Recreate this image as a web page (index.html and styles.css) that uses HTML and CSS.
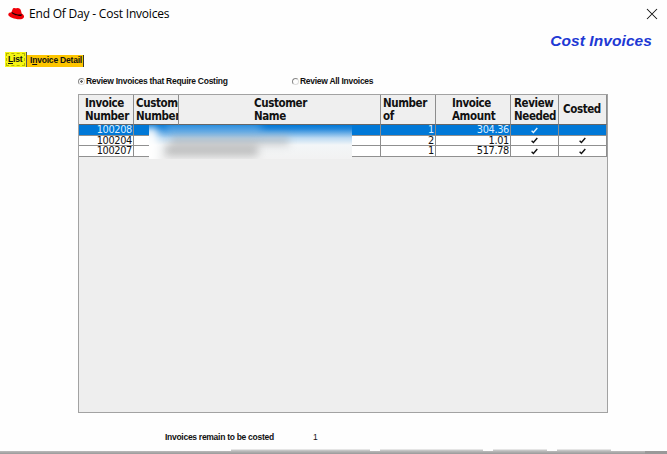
FILE: index.html
```html
<!DOCTYPE html>
<html lang="en">
<head>
<meta charset="utf-8">
<title>End Of Day - Cost Invoices</title>
<link rel="stylesheet" href="styles.css">
</head>
<body>
<div class="window">
  <header class="titlebar">
    <svg class="hat" width="17" height="13" viewBox="0 0 17 13"><path d="M.3 7.2C.5 5.8 2 5.4 3.3 5.6L4.6 2.2C5.2 1 6 .9 7 1.2 8 1.5 8.6 1 9.5 1 11.5 1 12.5 2 13 3.8L13.7 6.5C15.5 7.5 16.3 8.7 16 10 15.5 12.8 11 12.6 7.5 11.8 3.5 10.9 0 9.2.3 7.2Z" fill="#f00008"/><path d="M3.6 5.6C4.5 7.6 9.5 9.6 13 8.9 13.8 8.6 13.9 7.9 13.6 6.9 12.5 8 8 7.6 3.9 4.9Z" fill="#160406"/></svg>
    <span class="title">End Of Day - Cost Invoices</span>
    <svg class="close" width="12" height="12" viewBox="0 0 12 12"><path d="M1 1 11 11M11 1 1 11" stroke="#111" stroke-width="1.05"/></svg>
  </header>
  <h1>Cost Invoices</h1>
  <nav class="tabs">
    <div class="tab active"><span><u>L</u>ist</span></div>
    <div class="tab"><span>I<u>n</u>voice Detail</span></div>
  </nav>
  <div class="filters">
    <label class="first"><i class="radio on"></i><span>Review Invoices that Require Costing</span></label>
    <label><i class="radio"></i><span>Review All Invoices</span></label>
  </div>
  <main class="grid">
    <div class="row head">
      <div>Invoice<br>Number</div><div class="clip">Custome<br>Number</div><div class="name">Customer<br>Name</div><div class="of">Number<br>of</div><div class="amount">Invoice<br>Amount</div><div class="review">Review<br>Needed</div><div class="costed">Costed</div>
    </div>
    <div class="row selected"><div>100208</div><div></div><div></div><div>1</div><div>304.36</div><div class="mark"><svg width="7" height="7" viewBox="0 0 7 7"><path d="M.6 3.8 2.4 5.5 6.3 1"/></svg></div><div></div></div>
    <div class="row short"><div>100204</div><div></div><div></div><div>2</div><div>1.01</div><div class="mark"><svg width="7" height="7" viewBox="0 0 7 7"><path d="M.6 3.8 2.4 5.5 6.3 1"/></svg></div><div class="mark"><svg width="7" height="7" viewBox="0 0 7 7"><path d="M.6 3.8 2.4 5.5 6.3 1"/></svg></div></div>
    <div class="row"><div>100207</div><div></div><div></div><div>1</div><div>517.78</div><div class="mark"><svg width="7" height="7" viewBox="0 0 7 7"><path d="M.6 3.8 2.4 5.5 6.3 1"/></svg></div><div class="mark"><svg width="7" height="7" viewBox="0 0 7 7"><path d="M.6 3.8 2.4 5.5 6.3 1"/></svg></div></div>
    <div class="redaction"><i class="smudge pale"></i><i class="smudge one"></i><i class="smudge two"></i><i class="smudge three"></i></div>
  </main>
  <div class="summary"><b>Invoices remain to be costed</b><span>1</span></div>
  <footer><div class="buttons"><i></i><i></i><i></i><i></i></div><div class="edge"></div></footer>
</div>
</body>
</html>
```

FILE: styles.css
```css
* { box-sizing: border-box; }
body { margin: 0; background: #fefefe; color: #111; overflow: hidden; }
.window { width: 667px; height: 454px; display: flex; flex-direction: column; font: bold 8.5px/10px "Liberation Sans", Arial, sans-serif; letter-spacing: -.28px; }
.titlebar { height: 27px; display: flex; align-items: center; padding: 0 9px 0 8px; flex: none; }
.hat { margin-right: 4px; }
.title { font: 12px/18px "Open Sans", "Noto Sans", sans-serif; letter-spacing: -.2px; color: #000; white-space: nowrap; }
.close { margin-left: auto; }
h1 { margin: 4px 15px 0 0; height: 20px; font: italic bold 15.5px/20px "Liberation Sans", Arial, sans-serif; color: #2038d4; text-align: right; letter-spacing: .08px; flex: none; }
.tabs { height: 15px; margin: 1px 0 0 5px; display: flex; align-items: flex-end; flex: none; }
.tab { height: 12px; width: 57px; background: #fdc500; border-right: 1px solid #38352b; line-height: 11px; padding-left: 3px; white-space: nowrap; letter-spacing: -.2px; }
.tab.active { width: 22px; height: 15px; background: #f5f514; padding: 0; border-right: 1px solid #555; }
.tab.active span { display: block; width: 19px; height: 13px; margin: 1px; border: 1px dashed #b5b500; padding-left: 1px; line-height: 10px; }
.tab u { text-underline-offset: 1px; }
.filters { height: 12px; margin: 8px 0 0 78px; display: flex; flex: none; }
.filters label { display: flex; align-items: center; white-space: nowrap; }
.filters .first { width: 214px; }
.radio { width: 7px; height: 7px; border: 1px solid #888; border-right-color: #ddd; border-bottom-color: #ddd; border-radius: 50%; margin-right: 1px; }
.radio.on { background: radial-gradient(circle, #666 1px, transparent 1.5px); }
.grid { position: relative; width: 530px; height: 319px; margin: 7px 0 0 78px; border: 1px solid #a2a2a2; background: #eee; flex: none; }
.row { display: grid; grid-template-columns: 55px 45px 202px 55px 75px 48px 48px; height: 11px; background: #fff; font: 10.9px/11px "DejaVu Sans Condensed", "Noto Sans", sans-serif; letter-spacing: -.35px; }
.row.short { height: 10px; }
.row > div { border-right: 1px solid #8d8d8d; border-bottom: 1px solid #909090; text-align: right; padding-right: 1px; white-space: nowrap; line-height: 9px; min-width: 0; }
.row.selected { background: #0078d7; color: #dceeff; }
.row.head { height: 30px; background: #efefef; font: bold 11.5px/13px "DejaVu Sans Condensed", "Noto Sans", sans-serif; letter-spacing: -.4px; }
.row.head > div { text-align: left; padding: 2px 0 0 6px; line-height: 13px; border-bottom: 1px solid #666; }
.row.head .clip { padding-left: 2px; overflow: hidden; }
.row.head .name { padding-left: 75px; }
.row.head .of { padding-left: 2px; }
.row.head .amount { padding-left: 16px; }
.row.head .review { padding-left: 3px; }
.row.head .costed { padding: 8px 0 0 4px; }
.row > .mark { display: flex; justify-content: center; align-items: center; }
.mark path { fill: none; stroke: #111; stroke-width: 1.4; }
.selected .mark path { stroke: #e1f3ff; }
.redaction { position: absolute; left: 70px; top: 30px; width: 203px; height: 34px; overflow: hidden; background: linear-gradient(#0078d7 0, #2589dc 4px, #bcdaf2 13px, #f3f6f8 20px, #f2f2f2 100%); }
.smudge { position: absolute; filter: blur(4px); background: #999; }
.pale { left: 16px; top: 0; width: 96px; height: 8px; background: #8cc2ee; opacity: .6; }
.one { left: 22px; top: 12px; width: 118px; height: 8px; opacity: .5; }
.two { left: 16px; top: 20px; width: 93px; height: 11px; opacity: .6; }
.three { left: -5px; top: 3px; width: 13px; height: 38px; background: #fff; }
.summary { height: 12px; margin: 18px 0 0 165px; display: flex; line-height: 12px; flex: none; }
.summary b { width: 148px; white-space: nowrap; }
.summary span { font-weight: normal; }
footer { margin-top: auto; }
.buttons { display: grid; grid-template-columns: 139px 103px 54px 54px; column-gap: 10px; margin-left: 231px; height: 2px; }
.buttons i { background: #c5c5c5; border-top: 1px solid #e5e5e5; }
.edge { height: 3px; background: linear-gradient(90deg, transparent 645px, #999 645px), linear-gradient(#bbb, #999); }
```
